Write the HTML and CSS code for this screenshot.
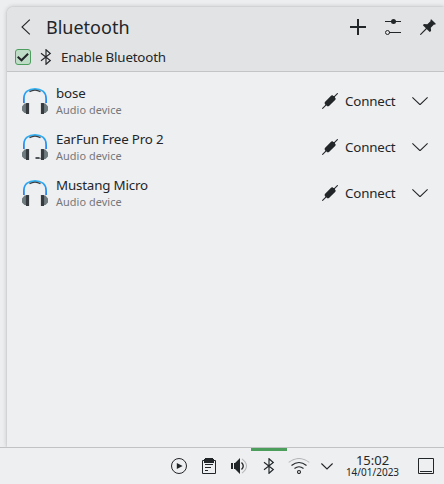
FILE: index.html
```html
<!DOCTYPE html>
<html lang="en">
<head>
<meta charset="utf-8">
<title>Bluetooth</title>
<link rel="stylesheet" href="styles.css">
</head>
<body>
<svg class="defs" width="0" height="0">
  <defs>
    <linearGradient id="band" x1="0" y1="0" x2="0" y2="1"><stop offset="0" stop-color="#2fb1f2"/><stop offset="1" stop-color="#1d7bf5"/></linearGradient>
    <symbol id="bluetooth" viewBox="0 0 16 16"><path d="M3 4.200 12.300 11.500 8 15.300V.7l4.300 3.800L3 11.800" fill="none" stroke="#232629" stroke-width="1.150"/></symbol>
    <symbol id="plug" viewBox="0 0 16 16"><path d="M.3 15.700 15.700.3" stroke="#232629" stroke-width="1.100"/><path d="M2.900 9 9.300 2.600l1.300-.3.800.7h1.500v1.500l.8.900-.3 1.300-6.400 6.400-1.300.3-.9-.8H3.300v-1.400l-.8-.9z" fill="#232629"/></symbol>
    <symbol id="chevron" viewBox="0 0 16 8"><path d="M.4.4 8 7.700 15.600.4" fill="none" stroke="#232629" stroke-width="1.100"/></symbol>
    <symbol id="headphones" viewBox="0 0 28 28">
      <path d="M2.900 16v-4.500C2.900 5 7.800 1.800 14 1.800S25.100 5 25.100 11.500V16" fill="none" stroke="url(#band)" stroke-width="1.700"/>
      <path d="M8.500 4.700q5.500-3.200 11 0" fill="none" stroke="#3b4045" stroke-width="1.400"/>
      <path d="M5 16.500H3.500L1 19.500v4l2.500 2.500H5zM23 16.500h1.500l2.500 3v4L24.500 26H23z" fill="#6e7a7e"/>
      <rect x="4.900" y="16" width="3.200" height="11" rx=".5" fill="#353a3e"/><rect x="19.900" y="16" width="3.200" height="11" rx=".5" fill="#353a3e"/>
    </symbol>
  </defs>
</svg>
<main class="desktop">
  <section class="panel">
    <header class="header">
      <div class="titlebar">
        <svg class="back" width="10" height="16"><path d="M8.800.6 1 8l7.800 7.400" fill="none" stroke="#232629" stroke-width="1.100"/></svg>
        <h1>Bluetooth</h1>
        <svg width="16" height="16"><path d="M8 0v16M0 8h16" stroke="#232629" stroke-width="2"/></svg>
        <svg width="16" height="16"><path d="M0 2.500h16M4 13.500h12" stroke="#232629"/><circle cx="8.500" cy="2.500" r="2.500" fill="#232629"/><circle cx="2.500" cy="13.500" r="2" fill="none" stroke="#232629"/></svg>
        <svg width="16" height="16"><path d="M.3 15.700 7 9" stroke="#232629" stroke-width="1.100"/><path d="m11.200.3 4.600 4.500-.7.9-1.100-.2-3.200 3.300.3 3.300-1.400 1L2.900 6.300l1-1.300 3.400.3L10.700 2l-.3-1z" fill="#232629"/></svg>
      </div>
      <label class="enable">
        <span class="check"><svg width="14" height="14"><path d="m1.700 6.800 3.800 3.500 6.600-6.600" fill="none" stroke="#232629" stroke-width="2"/></svg></span>
        <svg width="16" height="16"><use href="#bluetooth"/></svg>
        <span class="label">Enable Bluetooth</span>
      </label>
    </header>
    <ul class="devices">
      <li class="device">
        <svg width="28" height="28"><use href="#headphones"/></svg>
        <div class="info"><span class="label">bose</span><span class="kind">Audio device</span></div>
        <svg width="16" height="16"><use href="#plug"/></svg><span class="connect">Connect</span>
        <svg width="16" height="8"><use href="#chevron"/></svg>
      </li>
      <li class="device">
        <svg width="28" height="28"><use href="#headphones"/><path d="M14.500 25h4" stroke="#353a3e" stroke-width="1.700"/><path d="M18 25.300h2" stroke="#6e7a7e"/></svg>
        <div class="info"><span class="label">EarFun Free Pro 2</span><span class="kind">Audio device</span></div>
        <svg width="16" height="16"><use href="#plug"/></svg><span class="connect">Connect</span>
        <svg width="16" height="8"><use href="#chevron"/></svg>
      </li>
      <li class="device">
        <svg width="28" height="28"><use href="#headphones"/></svg>
        <div class="info"><span class="label">Mustang Micro</span><span class="kind">Audio device</span></div>
        <svg width="16" height="16"><use href="#plug"/></svg><span class="connect">Connect</span>
        <svg width="16" height="8"><use href="#chevron"/></svg>
      </li>
    </ul>
  </section>
  <footer class="taskbar">
    <div class="tray"><svg width="16" height="16"><circle cx="8" cy="8" r="7.500" fill="none" stroke="#232629"/><path d="M5.800 4.900v6.200L11.600 8z" fill="#232629"/></svg></div>
    <div class="tray"><svg width="16" height="16"><path d="M1.500 2.500h13v13h-13z" fill="none" stroke="#232629"/><path d="M3 5V1h1V0h8v1h1v4z" fill="#232629"/><path d="M4 6.500h8M4 9.500h6M4 12.500h3" stroke="#232629"/></svg></div>
    <div class="tray"><svg width="16" height="16"><path d="M0 5h2v6H0zM3 5h1l5-5v16l-5-5H3z" fill="#232629"/><path d="M10.500 4.500q3.500 3.500 0 7" fill="none" stroke="#232629" stroke-width="1.300"/><path d="M11 .9q9 7.100 0 14.200" fill="none" stroke="#b5b7b9" stroke-width="1.100"/></svg></div>
    <div class="tray active"><svg width="16" height="16"><use href="#bluetooth"/></svg></div>
    <div class="tray"><svg width="22" height="16"><path d="M.7 4.400q10.300-7.800 20.600 0" fill="none" stroke="#b5b7b9" stroke-width="1.100"/><path d="M3.500 7.500q7.500-6 15 0M6.500 10.500q4.500-3.600 9 0" fill="none" stroke="#232629" stroke-width="1.100"/><circle cx="11" cy="14" r="1.500" fill="none" stroke="#232629" stroke-width="1.100"/></svg></div>
    <div class="tray more"><svg width="12" height="7"><path d="m.4.5 5.600 5.500L11.600.5" fill="none" stroke="#232629" stroke-width="1.100"/></svg></div>
    <div class="clock"><span class="time">15:02</span><span class="date">14/01/2023</span></div>
    <svg class="show" width="16" height="16"><path d="M.5.500h15v15H.500zM2 13.500h12" fill="none" stroke="#232629"/></svg>
  </footer>
</main>
</body>
</html>
```
FILE: styles.css
```css
* { box-sizing: border-box; }
body { margin: 0; background: #eff0f1; color: #232629; font: 13.333px/18px "Noto Sans", sans-serif; overflow: hidden; }
svg { display: block; flex: none; }
.defs { position: absolute; }
.desktop { width: 444px; height: 484px; display: flex; flex-direction: column; background: #edeef0; }
.panel { height: 440px; margin: 7px 0 0 7px; flex: none; background: #eeeff1; border-radius: 6px 0 0 0; box-shadow: 0 0 5px rgba(0,0,0,.22), 0 0 1px rgba(0,0,0,.25); }
.header { height: 65px; background: #e2e3e5; border-bottom: 1px solid #c2c4c6; border-radius: 6px 0 0 0; }
.titlebar { height: 40px; padding: 0 8px 0 14px; display: flex; align-items: center; gap: 19px; }
.back { margin-right: -4px; }
h1 { margin: 0; flex: 1; font-size: 18px; line-height: 24px; font-weight: 400; }
.enable { height: 20px; padding-left: 8px; display: flex; align-items: center; gap: 7px; }
.label { letter-spacing: -.17px; }
.check { width: 16px; height: 16px; border: 1px solid #4d9e5e; border-radius: 3px; background: #bfdcc7; }
.devices { list-style: none; margin: 0; padding: 6px 16px 0 14px; }
.device { height: 46px; display: flex; align-items: center; }
.info { margin-left: 7px; flex: 1; display: flex; flex-direction: column; }
.kind { font-size: 10.9px; line-height: 16px; letter-spacing: .06px; color: #75777a; }
.connect { width: 67px; margin-left: 7px; letter-spacing: -.17px; }
.taskbar { height: 37px; flex: none; position: relative; z-index: 1; display: flex; padding: 0 10px 0 164px; border-top: 1px solid #c0c2c4; background: #edeff1; }
.tray { width: 30px; display: flex; align-items: center; justify-content: center; }
.active { width: 36px; margin: 0 -3px; box-shadow: inset 0 3px #4b9e5c; }
.more { width: 26px; }
.clock { width: 65px; display: flex; flex-direction: column; align-items: center; padding-top: 5px; }
.time { font-size: 13px; line-height: 15px; }
.date { font-size: 10px; line-height: 8px; white-space: nowrap; }
.show { margin: 10px 0 0 auto; }
```
